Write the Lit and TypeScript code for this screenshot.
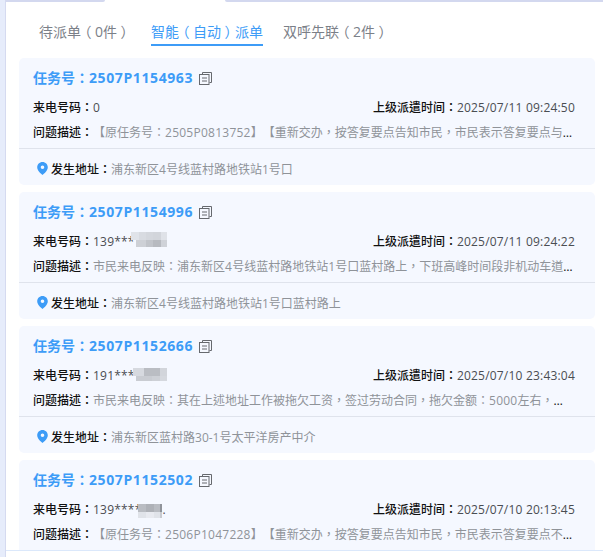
import { LitElement, html, css } from "lit";
import { customElement } from "lit/decorators.js";

interface Cell {
  w: number;
  c: string;
}
interface Mask {
  left: number;
  top: number;
  rows: { h: number; pad: number; cells: Cell[] }[];
}
interface Task {
  id: string;
  phone: string;
  mask?: Mask;
  time: string;
  desc: string;
  addr: string;
}

const tasks: Task[] = [
  {
    id: "2507P1154963",
    phone: "0",
    time: "2025/07/11 09:24:50",
    desc: "【原任务号：2505P0813752】【重新交办，按答复要点告知市民，市民表示答复要点与市民表示答复要点与市民表示答复要点与",
    addr: "浦东新区4号线蓝村路地铁站1号口",
  },
  {
    id: "2507P1154996",
    phone: "139***",
    mask: {
      left: 98,
      top: 0,
      rows: [
        { h: 8, pad: 0, cells: [{ w: 8, c: "#e0e3e9" }, { w: 7, c: "#d8dbe1" }, { w: 7, c: "#d4d7dd" }, { w: 8, c: "#d2d5db" }, { w: 6, c: "#dfe2e8" }] },
        { h: 7, pad: 5, cells: [{ w: 10, c: "#cdd0d6" }, { w: 7, c: "#c1c4ca" }, { w: 8, c: "#b7bac0" }, { w: 6, c: "#cfd2d8" }] },
      ],
    },
    time: "2025/07/11 09:24:22",
    desc: "市民来电反映：浦东新区4号线蓝村路地铁站1号口蓝村路上，下班高峰时间段非机动车道上有车辆违规停放车辆违规停放",
    addr: "浦东新区4号线蓝村路地铁站1号口蓝村路上",
  },
  {
    id: "2507P1152666",
    phone: "191****",
    mask: {
      left: 100,
      top: 2,
      rows: [
        { h: 8, pad: 0, cells: [{ w: 11, c: "#d6d9df" }, { w: 16, c: "#babdc3" }, { w: 7, c: "#d2d5db" }] },
        { h: 5, pad: 3, cells: [{ w: 16, c: "#c9ccd2" }, { w: 8, c: "#cdd0d6" }, { w: 7, c: "#d5d8de" }] },
      ],
    },
    time: "2025/07/10 23:43:04",
    desc: "市民来电反映：其在上述地址工作被拖欠工资，签过劳动合同，拖欠金额：5000左右，故来电要求相关部门核实处理相关部门",
    addr: "浦东新区蓝村路30-1号太平洋房产中介",
  },
  {
    id: "2507P1152502",
    phone: "139****123.",
    mask: {
      left: 105,
      top: 4,
      rows: [
        { h: 8, pad: 0, cells: [{ w: 8, c: "#b9bcc2" }, { w: 8, c: "#aeb1b7" }, { w: 6, c: "#b9bcc2" }, { w: 2, c: "#8f939a" }] },
        { h: 6, pad: 0, cells: [{ w: 8, c: "#e0e3e9" }, { w: 8, c: "#e8eaf0" }, { w: 6, c: "#e0e3e9" }, { w: 2, c: "#c8cbd1" }] },
      ],
    },
    time: "2025/07/10 20:13:45",
    desc: "【原任务号：2506P1047228】【重新交办，按答复要点告知市民，市民表示答复要点不认可答复要点不认可答复要点不认可",
    addr: "",
  },
];

/* Splits a string so that parentheses and runs of Latin characters can be styled. */
function fine(text: string) {
  return text.split(/([（）]|[0-9A-Za-z]+)/).map((part) => {
    if (part === "（" || part === "）") return html`<span class="paren">${part}</span>`;
    if (/^[0-9A-Za-z]+$/.test(part)) return html`<span class="latin">${part}</span>`;
    return part;
  });
}

@customElement("app-root")
export class AppRoot extends LitElement {
  static styles = css`
    :host {
      display: block;
      width: 603px;
      height: 557px;
      overflow: hidden;
      background: #e6ecfb;
      font-family: "Open Sans", "Noto Sans CJK TC", sans-serif;
      text-spacing-trim: space-all;
    }
    .panel {
      margin-left: 5px;
      height: 557px;
      box-sizing: border-box;
      overflow: hidden;
      background: #fff;
      border-left: 1px solid #d5daf0;
      display: flex;
      flex-direction: column;
    }
    .edge {
      flex: none;
      display: flex;
      justify-content: space-between;
      height: 2px;
    }
    .edge i {
      display: block;
      height: 2px;
      background: #d3d8ef;
    }
    .edge i:first-child {
      width: 99px;
      border-bottom-right-radius: 3px;
    }
    .edge i:last-child {
      width: 378px;
      border-bottom-left-radius: 3px;
    }
    .tabs {
      display: flex;
      gap: 20px;
      height: 56px;
      box-sizing: border-box;
      padding: 18px 0 0 33px;
      font-size: 14px;
      line-height: 24px;
      color: #7b8088;
      flex: none;
    }
    .tab {
      height: 24px;
      white-space: nowrap;
    }
    .tab.on {
      color: #3d9cf7;
      border-bottom: 2px solid #3d9cf7;
    }
    .tab .paren {
      display: inline-block;
      width: 14px;
      text-align: center;
      font-feature-settings: "halt";
    }
    .list {
      flex: none;
      height: 493px;
      box-sizing: border-box;
      overflow: hidden;
      border-bottom: 1px solid #dbe8fb;
      padding: 0 8px 0 13px;
      display: flex;
      flex-direction: column;
      gap: 7px;
    }
    .card {
      flex: none;
      height: 127px;
      box-sizing: border-box;
      background: #f5f8ff;
      border-radius: 5px;
      display: flex;
      flex-direction: column;
      overflow: hidden;
    }
    .top {
      height: 91px;
      box-sizing: border-box;
      padding: 9px 20px 0 14px;
      border-bottom: 1px solid #dfe3ec;
      flex: none;
    }
    .title {
      height: 22px;
      display: flex;
      align-items: center;
      gap: 6px;
      font-size: 14px;
      font-weight: 700;
      line-height: 22px;
      color: #3d9cf7;
    }
    .title em {
      font-style: normal;
      letter-spacing: 0.6px;
    }
    .title svg {
      display: block;
    }
    .row {
      display: flex;
      justify-content: space-between;
      align-items: center;
      height: 20px;
      margin-top: 9px;
      font-size: 12px;
      line-height: 20px;
      color: #4a4d52;
      letter-spacing: 0.2px;
    }
    .row b,
    .desc b,
    .addr b {
      color: #111;
      font-weight: 500;
      letter-spacing: 0;
    }
    .phone {
      position: relative;
      display: block;
    }
    .mask {
      position: absolute;
    }
    .mask div {
      display: flex;
    }
    .mask i {
      display: block;
      height: 100%;
    }
    .desc {
      margin-top: 5px;
      height: 20px;
      font-size: 12px;
      line-height: 20px;
      color: #111;
      white-space: nowrap;
      overflow: hidden;
      text-overflow: ellipsis;
      width: 541px;
    }
    .desc > span {
      color: #8f9399;
    }
    .desc .latin {
      letter-spacing: 0.25px;
    }
    .addr {
      flex: 1;
      display: flex;
      align-items: center;
      gap: 3px;
      padding: 3px 0 0 18px;
      font-size: 12px;
      color: #8f9399;
      white-space: nowrap;
    }
  `;

  private copyIcon() {
    return html`<svg width="13" height="13" viewBox="0 0 13 13" fill="none" stroke="#66696e" stroke-width="1">
      <path d="M3.5 2.5V0.5H12.5V10.5H10.5" />
      <rect x="0.5" y="2.5" width="9.5" height="10" />
      <path d="M3 6H8M3 9H8" />
    </svg>`;
  }

  private pinIcon() {
    return html`<svg width="11" height="13" viewBox="0 0 11 13">
      <path
        fill="#3d9cf7"
        fill-rule="evenodd"
        d="M5.5 0C2.5 0 .2 2.3.2 5.2c0 3.2 3.3 6 5.3 7.8 2-1.8 5.3-4.6 5.3-7.8C10.8 2.3 8.5 0 5.5 0zm0 3.4a1.8 1.8 0 1 1 0 3.6 1.8 1.8 0 0 1 0-3.6z"
      />
    </svg>`;
  }

  private renderMask(m?: Mask) {
    if (!m) return "";
    return html`<span class="mask" style="left:${m.left}px;top:${m.top}px">
      ${m.rows.map(
        (r) => html`<div style="height:${r.h}px;padding-left:${r.pad}px">
          ${r.cells.map((c) => html`<i style="width:${c.w}px;background:${c.c}"></i>`)}
        </div>`,
      )}
    </span>`;
  }

  private renderCard(t: Task) {
    return html`<div class="card">
      <div class="top">
        <div class="title"><span>任务号：<em>${t.id}</em></span>${this.copyIcon()}</div>
        <div class="row">
          <span class="phone"><b>来电号码：</b>${t.phone}${this.renderMask(t.mask)}</span>
          <span><b>上级派遣时间：</b>${t.time}</span>
        </div>
        <div class="desc"><b>问题描述：</b><span>${fine(t.desc)}</span></div>
      </div>
      <div class="addr">${this.pinIcon()}<span><b>发生地址：</b>${t.addr}</span></div>
    </div>`;
  }

  render() {
    return html`<div class="panel">
      <div class="edge"><i></i><i></i></div>
      <div class="tabs">
        <div class="tab">${fine("待派单（0件）")}</div>
        <div class="tab on">${fine("智能（自动）派单")}</div>
        <div class="tab">${fine("双呼先联（2件）")}</div>
      </div>
      <div class="list">${tasks.map((t) => this.renderCard(t))}</div>
    </div>`;
  }
}
